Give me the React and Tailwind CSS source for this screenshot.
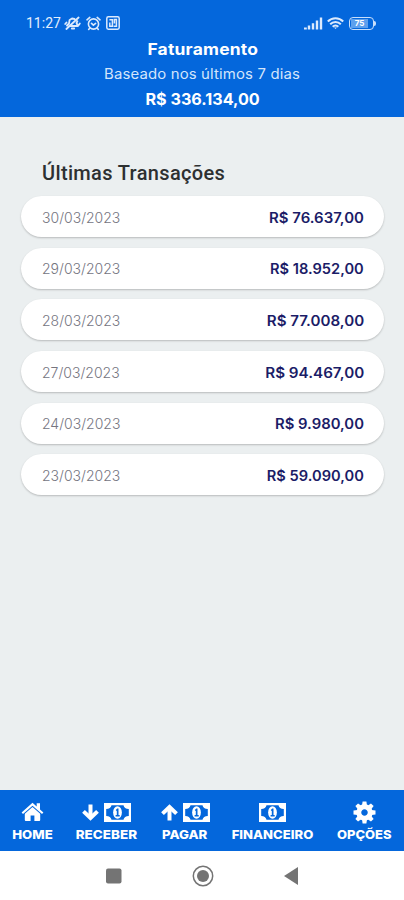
import React from "react";

const transactions = [
  ["30/03/2023", "R$ 76.637,00", "scale-x-[1.067]"],
  ["29/03/2023", "R$ 18.952,00", "scale-x-[1.045]"],
  ["28/03/2023", "R$ 77.008,00", "scale-x-[1.08]"],
  ["27/03/2023", "R$ 94.467,00", "scale-x-[1.085]"],
  ["24/03/2023", "R$ 9.980,00", "scale-x-[1.06]"],
  ["23/03/2023", "R$ 59.090,00", "scale-x-[1.045]"],
];

function Money() {
  return (
    <svg width="27" height="19" viewBox="0 0 27 19" fill="none">
      <rect width="27" height="19" fill="#fff" />
      <path d="M7.5 2.2H19.5C19.9 4.6 21.8 6 24.8 6V13C21.8 13 19.9 14.4 19.5 16.8H7.5C7.1 14.4 5.2 13 2.2 13V6C5.2 6 7.1 4.6 7.5 2.2Z" fill="#0467dc" />
      <ellipse cx="13.5" cy="9.5" rx="4.4" ry="6.2" fill="#fff" />
      <path d="M11.8 6.9L13.2 5.4H14.5V12H15.7V13.4H11.6V12H12.8V7.5L12.2 8Z" fill="#0467dc" />
    </svg>
  );
}

function HomeIcon() {
  return (
    <svg width="23" height="20" viewBox="0 0 23 20" fill="#fff">
      <path d="M11.5 .8L15.7 4.5V1.2H19V7.4L22.4 10.4L21 12L11.5 3.7L2 12L.6 10.4Z" />
      <path d="M11.5 5L19.2 11.7V18Q19.2 19 18.2 19H13.4V13.4H9.6V19H4.8Q3.8 19 3.8 18V11.7Z" />
    </svg>
  );
}

function Arrow({ className }) {
  return (
    <svg className={className} width="17" height="17" viewBox="0 0 17 17" fill="none" stroke="#fff">
      <path d="M8.5 .5V13" strokeWidth="4" />
      <path d="M1.5 7.4L8.5 14L15.5 7.4" strokeWidth="4" />
    </svg>
  );
}

function Gear() {
  return (
    <svg width="23" height="23" viewBox="-11.5 -11.5 23 23" fill="none">
      <circle r="5.7" stroke="#fff" strokeWidth="4.9" />
      <g fill="#fff">
        {[0, 45, 90, 135, 180, 225, 270, 315].map((angle) => (
          <path key={angle} transform={`rotate(${angle})`} d="M-2.5 -7L-1.9 -11H1.9L2.5 -7Z" />
        ))}
      </g>
    </svg>
  );
}

function Alarm() {
  return (
    <svg width="15" height="15" viewBox="0 0 15 15" fill="none" stroke="#dceafd" strokeWidth="1.6" strokeLinecap="round">
      <circle cx="7.5" cy="8" r="5.1" />
      <path d="M1 3.8L3.8 1.4M14 3.8L11.2 1.4M5.5 7.4L7.4 9.1L9.6 7.4M3.6 12.3L2.7 13.4M11.4 12.3L12.3 13.4" />
    </svg>
  );
}

function Tab({ className, label, stretch, children }) {
  return (
    <div className={"flex flex-col items-center pt-[11px] " + className}>
      <div className="flex h-[22px] items-center gap-[5px]">{children}</div>
      <span className={"mt-[4px] leading-[16px] whitespace-nowrap " + stretch}>{label}</span>
    </div>
  );
}

export default function App() {
  return (
    <div className="flex h-[900px] w-[404px] flex-col overflow-hidden bg-[#ebeff0] font-['Inter','Liberation_Sans',sans-serif]">
      <header className="h-[117px] shrink-0 bg-[#0467dc] text-white">
        <div className="flex h-[38px] items-center pt-[8px] pr-[28px] pl-[26px]">
          <span className="w-[38px] font-['Roboto',sans-serif] text-[14px] whitespace-nowrap text-[#e3eefc]">11:27</span>
          <svg width="17" height="15" viewBox="0 0 17 15" fill="none" stroke="#dceafd" strokeWidth="1.8" strokeLinecap="round" strokeLinejoin="round">
            <path d="M3 9.5L5 7.5L5.6 4L8 2.5L10.5 3M13.4 5.2L12.5 7L14 10H6M7.8 12.5H10.2M2.4 13L14.6 1.5M1.2 8L2.5 6.5M15.8 7.5L14.8 9" />
          </svg>
          <span className="ml-[5px]"><Alarm /></span>
          <svg className="ml-[5px]" width="14" height="14" viewBox="0 0 14 14" fill="none" stroke="#dceafd" strokeWidth="1.5">
            <rect x="0.8" y="0.8" width="12.4" height="12.4" rx="1.6" />
            <path d="M3.4 3.8H6.4V10.2H3.8V6.5M7.6 10.2H10.4V3.6H8.4V7.5" />
          </svg>
          <svg className="ml-auto" width="19" height="13" viewBox="0 0 19 13" fill="#dceafd">
            <path d="M0 10.4h2.8v2.1H0zM3.8 8.6h2.4v3.9H3.8zM7.8 6.3h2.4v6.2H7.8zM11.8 3.5h2.4v9h-2.4zM15.8 .5h2.4v12h-2.4z" />
          </svg>
          <svg className="ml-[4px]" width="17" height="13" viewBox="0 0 17 13" fill="none" stroke="#dceafd" strokeWidth="2">
            <path d="M.8 4.5C5 .2 12 .2 16.2 4.5M3.2 7.2C6 4.2 11 4.2 13.8 7.2M5.7 9.7C7.3 8 9.7 8 11.3 9.7" />
            <path d="M7 10.6L8.5 12L10 10.6Z" fill="#dceafd" stroke="none" />
          </svg>
          <div className="ml-[5px] flex h-[13px] w-[25px] items-center rounded-[4px] border-[1.5px] border-[#c9dffb] p-[1px]">
            <span className="flex h-full w-[17px] items-center justify-center bg-[#5da0ee] text-[8px] leading-none font-bold">75</span>
          </div>
          <span className="h-[5px] w-[2px] rounded-r bg-[#c9dffb]" />
        </div>
        <div className="flex flex-col items-center whitespace-nowrap">
          <h1 className="ml-[2px] h-[22px] scale-x-[1.09] text-[16px] leading-[22px] font-bold tracking-[0.2px]">Faturamento</h1>
          <p className="ml-[1px] mt-[3px] h-[22px] scale-x-[1.065] text-[14px] leading-[22px] tracking-[0.14px] text-[#d4e5fb]">Baseado nos últimos 7 dias</p>
          <p className="ml-[2px] mt-[3px] h-[22px] scale-x-[1.01] text-[16px] leading-[22px] font-bold">R$ 336.134,00</p>
        </div>
      </header>
      <main className="flex-1 pt-[42px] pr-[20px] pl-[21px]">
        <h2 className="ml-[21px] h-[28px] font-['Roboto',sans-serif] text-[20px] leading-[28px] font-medium tracking-[0.35px] whitespace-nowrap text-[#2d3031]">Últimas Transações</h2>
        <ul className="mt-[9px] flex flex-col gap-[10.7px]">
          {transactions.map(([date, value, stretch]) => (
            <li key={date} className="flex h-[41px] items-center justify-between rounded-full bg-white pt-px pr-[20px] pl-[21px] shadow-[0_1px_2px_rgba(0,0,0,0.22)]">
              <span className="text-[14px] font-light text-[#75757f]">{date}</span>
              <span className={"origin-right text-[14px] font-semibold text-[#1b1c67] " + stretch}>{value}</span>
            </li>
          ))}
        </ul>
      </main>
      <nav className="flex h-[61px] shrink-0 bg-[#0467dc] text-[12px] font-extrabold text-white">
        <Tab className="w-[65px]" label="HOME" stretch="scale-x-[1.1]"><HomeIcon /></Tab>
        <Tab className="w-[84px]" label="RECEBER" stretch="scale-x-[1.12]"><Arrow /><Money /></Tab>
        <Tab className="w-[73px]" label="PAGAR" stretch="scale-x-[1.1]"><Arrow className="rotate-180" /><Money /></Tab>
        <Tab className="w-[103px]" label="FINANCEIRO" stretch="scale-x-[1.09]"><Money /></Tab>
        <Tab className="w-[80px]" label="OPÇÕES" stretch="scale-x-[1.08]"><Gear /></Tab>
      </nav>
      <footer className="flex h-[49px] shrink-0 items-center justify-center bg-white">
        <svg width="200" height="24" viewBox="0 0 200 24" fill="#747474">
          <rect x="4" y="4.5" width="15.5" height="15" rx="2" />
          <circle cx="101" cy="12" r="9.7" fill="none" stroke="#747474" strokeWidth="1.5" />
          <circle cx="101" cy="12" r="6" />
          <path d="M196 3V21L182 12Z" />
        </svg>
      </footer>
    </div>
  );
}
